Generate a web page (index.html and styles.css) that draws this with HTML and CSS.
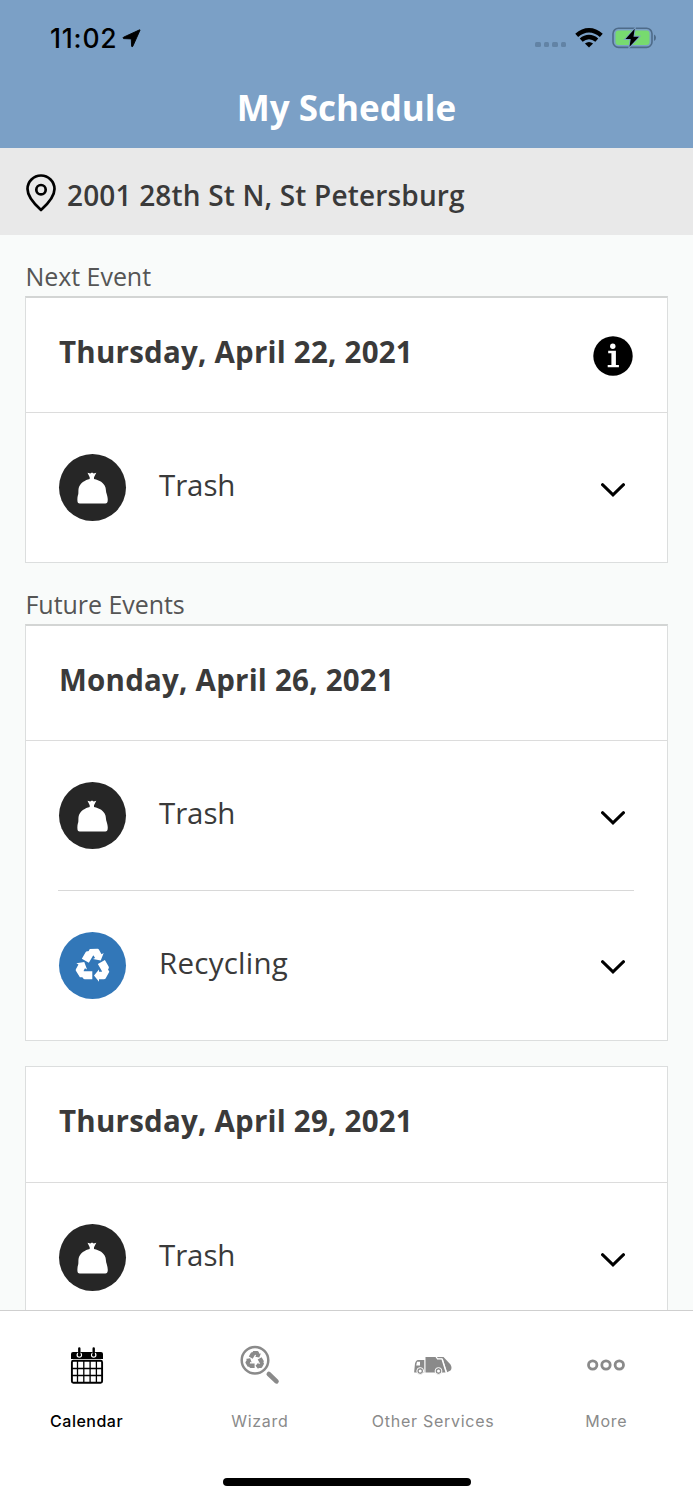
FILE: index.html
```html
<!DOCTYPE html>
<html lang="en">
<head>
<meta charset="utf-8">
<title>My Schedule</title>
<link rel="stylesheet" href="styles.css">
</head>
<body>
<svg class="defs" width="0" height="0" aria-hidden="true">
  <symbol id="trash" viewBox="0 0 67 67">
    <path fill="#fff" d="M28.500 18.700l2.800.8 1.700-1 1.700 1 2.600-.8-2.300 4.500v1.700c5.600 1.200 9.800 3.500 11.400 8.300.6 2 .4 4.700 1.300 6.700.8 2.600 1.400 5.200.9 7.700-.2 1.300-1 1.800-2.200 1.800H20.700c-1.300 0-2.100-.7-2.200-2-.3-2.600 0-5 .8-7.400.3-2.200-.2-5 .7-7 1.900-4.600 6-6.900 10.700-8.100v-1.700z"/>
  </symbol>
  <symbol id="recycle" viewBox="-18 -18 36 36">
    <g id="arm"><path d="M-10.700 5.200H-.7V13.300H-8.200Q-9.300 13.300-9.900 12.300L-12.500 8z"/><path d="M1 9.500L6 3.400V5.800H8.500L14.300 2.300 16.300 5.700 12.600 12.500Q12 13.300 11 13.300H6V15.800z"/></g>
    <use href="#arm" transform="rotate(120)"/>
    <use href="#arm" transform="rotate(240)"/>
  </symbol>
  <symbol id="chevron" viewBox="0 0 24 14">
    <path d="M1.500 1.700L12 11.800 22.500 1.700" fill="none" stroke="#000" stroke-width="3" stroke-linecap="round"/>
  </symbol>
</svg>
<div class="screen">
  <header class="header">
    <div class="status">
      <span class="time">11:02</span>
      <svg class="nav-arrow" width="19" height="19" viewBox="0 0 19 19"><path stroke="#000" stroke-width=".9" d="M18 1.200L10.800 17.300Q10 18.600 9.600 17L9.300 9.900 1.600 9.600Q.2 9 1.500 8.200L17 1.100Q18.300.5 18 1.200z"/></svg>
      <span class="dots"><i></i><i></i><i></i><i></i></span>
      <svg class="wifi" width="28" height="20" viewBox="0 0 28 20"><g fill="none" stroke="#000" stroke-width="4.400"><path d="M1.700 7.300Q7.500 2.200 14 2.200T26.300 7.300"/><path d="M6.200 12.200Q9.800 9 14 9T21.800 12.200"/></g><path d="M9.900 15.600Q14 12.400 18.100 15.600L14 19.500z"/></svg>
      <svg class="battery" width="44" height="22" viewBox="0 0 44 22"><rect x="1" y="1.200" width="39" height="19.200" rx="5.500" fill="none" stroke="#4e6b89" stroke-width="1.600"/><rect x="3.500" y="3.600" width="34" height="14.500" rx="3" fill="#77da6f"/><path d="M42 7.500Q44 8.500 44 10.800T42 14z" fill="#4e6b89"/><path d="M22.700 1.800L13.500 12h5.200L17.500 19.800 27 9.700h-5.500z" stroke="#7ba0c6" stroke-width="1.800" paint-order="stroke"/></svg>
    </div>
    <h1 class="title">My Schedule</h1>
  </header>
  <div class="address">
    <svg width="30" height="38" viewBox="0 0 30 38" fill="none" stroke="#000" stroke-width="2.700"><path d="M15 36Q1.500 24 1.500 15A13.500 13.500 0 0 1 28.500 15Q28.500 24 15 36z" stroke-linejoin="round"/><circle cx="15" cy="15.700" r="4.700"/></svg>
    <span>2001 28th St N, St Petersburg</span>
  </div>
  <main class="list">
    <h2 class="label">Next Event</h2>
    <section class="card lead">
      <div class="date"><span>Thursday, April 22, 2021</span>
        <svg class="info" width="40" height="40" viewBox="0 0 40 40"><circle cx="20" cy="20" r="19.700"/><path fill="#fff" d="M15.200 14.800h7.700v14.100h3v2.400H14.700v-2.400h3.700V17.200h-3.200z"/><circle cx="19.800" cy="10.200" r="2.700" fill="#fff"/></svg>
      </div>
      <div class="event"><span class="badge"><svg width="67" height="67"><use href="#trash"/></svg></span><span class="name">Trash</span><svg class="chev" width="24" height="14"><use href="#chevron"/></svg></div>
    </section>
    <h2 class="label">Future Events</h2>
    <section class="card lead">
      <div class="date"><span>Monday, April 26, 2021</span></div>
      <div class="event"><span class="badge"><svg width="67" height="67"><use href="#trash"/></svg></span><span class="name">Trash</span><svg class="chev" width="24" height="14"><use href="#chevron"/></svg></div>
      <div class="event"><span class="badge blue"><svg width="36" height="36" fill="#fff"><use href="#recycle"/></svg></span><span class="name rec">Recycling</span><svg class="chev" width="24" height="14"><use href="#chevron"/></svg></div>
    </section>
    <section class="card">
      <div class="date"><span>Thursday, April 29, 2021</span></div>
      <div class="event"><span class="badge"><svg width="67" height="67"><use href="#trash"/></svg></span><span class="name">Trash</span><svg class="chev" width="24" height="14"><use href="#chevron"/></svg></div>
    </section>
  </main>
  <footer class="footer">
    <nav class="tabs">
      <a class="tab active">
        <svg width="40" height="40" viewBox="0 -2 40 40"><path d="M4 12V7Q4 5 6 5H34Q36 5 36 7V12z"/><g stroke="#fff" stroke-width="1.200"><circle cx="12.300" cy="8" r="2.200"/><circle cx="26.700" cy="8" r="2.200"/></g><path d="M12.300 1.500V8M26.700 1.500V8" stroke="#000" stroke-width="2.400" stroke-linecap="round"/><g fill="none" stroke="#000"><rect x="4.900" y="13.800" width="30.200" height="22" rx="1.500" stroke-width="1.900"/><path stroke-width="1.300" d="M10.500 13.500V36M16.800 13.500V36M23.100 13.500V36M29.400 13.500V36M4.800 21.500H35.200M4.800 28.500H35.200"/></g></svg>
        <span>Calendar</span>
      </a>
      <a class="tab">
        <svg width="40" height="40" viewBox="0 0 40 40"><circle cx="15" cy="15.200" r="13.300" fill="none" stroke="#8a8a8a" stroke-width="2.500"/><path d="M28.800 29L36.500 36.300" stroke="#8a8a8a" stroke-width="4.600" stroke-linecap="round"/><use href="#recycle" x="5" y="5.500" width="20" height="20"/></svg>
        <span>Wizard</span>
      </a>
      <a class="tab">
        <svg width="40" height="40" viewBox="0 0 40 40"><path d="M1.200 26.500L2 18.500Q3 15 5 15H11.300V27.500H1.200zM12.500 12H22.500L24.200 14.500H28.500L32.500 27.500H12.500z"/><path d="M24 12H30.500L37.500 19.500Q39.500 23 37.500 25.500L34 27.200 29.700 14H25.200z"/><path d="M24 13.600H29.300L33.500 27" fill="none" stroke="#fff" stroke-width=".9"/><path d="M4 16.800H7V20.500H3.200z" fill="#fff"/><g stroke="#fff" stroke-width="1"><circle cx="7.200" cy="26" r="3.400"/><circle cx="25.500" cy="26" r="3.400"/></g><g fill="#fff"><circle cx="7.200" cy="26" r="1.500"/><circle cx="25.500" cy="26" r="1.500"/></g></svg>
        <span>Other Services</span>
      </a>
      <a class="tab">
        <svg width="40" height="40" viewBox="0 0 40 40"><g fill="none" stroke="#8a8a8a" stroke-width="2.800"><circle cx="6.700" cy="20" r="4.200"/><circle cx="20" cy="20" r="4.200"/><circle cx="33.300" cy="20" r="4.200"/></g></svg>
        <span>More</span>
      </a>
    </nav>
    <div class="home"></div>
  </footer>
</div>
</body>
</html>
```
FILE: styles.css
```css
* { box-sizing: border-box; }
body { margin: 0; font-family: "Open Sans", "Noto Sans", sans-serif; color: #3a3a3a; }
svg { display: block; flex: none; }
.defs { position: absolute; }
h1, h2 { margin: 0; }
.screen { display: flex; flex-direction: column; height: 1500px; overflow: hidden; background: #f9fbfa; }
.header { height: 148px; flex: none; background: #7ba0c6; }
.status { display: flex; align-items: center; height: 76px; padding: 0 37px 0 50px; font-family: Inter, sans-serif; }
.time { font-size: 26.500px; font-weight: 500; letter-spacing: .8px; color: #000; width: 72px; }
.nav-arrow { margin-right: auto; }
.dots { display: flex; gap: 3px; margin: 13px 9px 0 0; }
.dots i { width: 5.500px; height: 5.500px; border-radius: 1.500px; background: #6283a5; }
.wifi { margin-right: 9px; }
.title { font-size: 35px; line-height: 64px; font-weight: 700; color: #fff; text-align: center; }
.address { display: flex; align-items: center; gap: 11px; height: 87px; flex: none; padding: 6px 26px 0; background: #e9e9e9; font-size: 28px; font-weight: 600; letter-spacing: .17px; }
.address svg { margin-top: -4px; }
.list { flex: 1; min-height: 0; overflow: hidden; padding: 20px 25px 0; }
.label { height: 41px; padding-left: .5px; line-height: 43px; font-size: 25px; font-weight: 400; letter-spacing: -.05px; color: #555; }
.card { background: #fff; border: 1px solid #dcdede; }
.card.lead { border-top: 2px solid #d3d5d4; margin-bottom: 20px; }
.card.lead + .card { margin-top: 25px; }
.date { display: flex; justify-content: space-between; align-items: center; height: 116px; padding: 0 34px 8px 33px; font-size: 29.500px; font-weight: 700; letter-spacing: .22px; border-bottom: 1px solid #dcdcdc; }
.lead .date { height: 115px; padding-bottom: 7px; }
.info { margin-top: 8px; }
.event { display: flex; align-items: center; height: 149px; padding: 0 42px 0 33px; }
.event + .event { height: 150px; position: relative; }
.event + .event::before { content: ""; position: absolute; left: 32px; right: 33px; top: 0; height: 1px; background: #d8d8d8; }
.badge { display: flex; align-items: center; justify-content: center; width: 67px; height: 67px; border-radius: 50%; background: #262626; }
.badge.blue { padding-top: 2px; background: #3277b8; }
.name { margin: -6px auto 0 33px; font-size: 29.500px; letter-spacing: -.1px; }
.name.rec { letter-spacing: .25px; }
.chev { margin-top: 4px; }
.footer { height: 190px; flex: none; background: #fff; border-top: 1px solid #cfcfcf; display: flex; flex-direction: column; align-items: center; }
.tabs { display: grid; grid-template-columns: repeat(4, 1fr); width: 100%; height: 167px; padding-top: 34px; }
.tab { display: flex; flex-direction: column; align-items: center; gap: 24px; font: 400 16px/24px Inter, sans-serif; letter-spacing: .73px; color: #8a8a8a; fill: #8a8a8a; }
.tab.active { color: #000; fill: #000; font-weight: 500; letter-spacing: .5px; }
.home { width: 248px; height: 8px; border-radius: 4px; background: #000; }
```
